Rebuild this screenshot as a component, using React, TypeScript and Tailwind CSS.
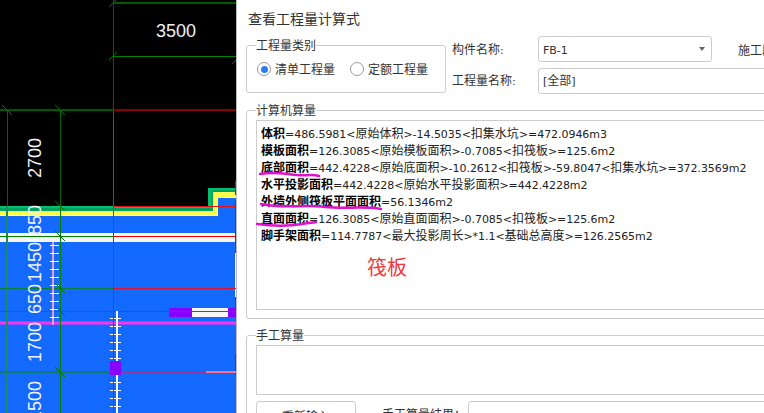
import React from 'react';

const lines: { name: string; rest: string }[] = [
  { name: '体积', rest: '=486.5981<原始体积>-14.5035<扣集水坑>=472.0946m3' },
  { name: '模板面积', rest: '=126.3085<原始模板面积>-0.7085<扣筏板>=125.6m2' },
  { name: '底部面积', rest: '=442.4228<原始底面积>-10.2612<扣筏板>-59.8047<扣集水坑>=372.3569m2' },
  { name: '水平投影面积', rest: '=442.4228<原始水平投影面积>=442.4228m2' },
  { name: '外墙外侧筏板平面面积', rest: '=56.1346m2' },
  { name: '直面面积', rest: '=126.3085<原始直面面积>-0.7085<扣筏板>=125.6m2' },
  { name: '脚手架面积', rest: '=114.7787<最大投影周长>*1.1<基础总高度>=126.2565m2' },
];

const dims = [
  { label: '2700', y: 158 },
  { label: '850', y: 220 },
  { label: '1450', y: 262 },
  { label: '650', y: 299 },
  { label: '1700', y: 342 },
  { label: '1500', y: 401 },
];

const hTicks: [number, number][] = [[113, 3], [113, 56], [236, 60]];
const vTicks: [number, number][] = [[7, 110], [60, 110], [60, 206], [60, 236], [60, 288], [60, 311], [60, 372]];

// latin runs are drawn a size smaller in DejaVu, the way the dialog's font does it
const Mixed = ({ text }: { text: string }) => (
  <>
    {text.split(/([\u4e00-\u9fff：]+)/).map((part, i) =>
      i % 2 === 1 ? (
        <span key={i}>{part}</span>
      ) : (
        <span key={i} className="text-[11px] tracking-[-0.05px] font-['DejaVu_Sans']">{part}</span>
      ),
    )}
  </>
);

const CadCanvas = () => (
  <svg width="236" height="413" className="shrink-0 block bg-black">
    <polygon points="0,206 208,206 208,188 236,188 236,413 0,413" fill="#00c070" />
    <polygon points="0,208 211,208 211,190 236,190 236,413 0,413" fill="#00a060" />
    <polygon points="0,211 213,211 213,192 236,192 236,413 0,413" fill="#ffff4d" />
    <polygon points="0,215 217,215 217,197 236,197 236,413 0,413" fill="#f4f4f4" />
    <polygon points="0,216 218,216 218,198 236,198 236,413 0,413" fill="#1469ff" />

    <rect x="0" y="233" width="235" height="9" fill="#f7f7f7" />
    <rect x="235" y="181" width="1" height="14" fill="#8800ff" />
    <rect x="235" y="200" width="1" height="53" fill="#8800ff" />
    <rect x="235" y="253" width="1" height="44" fill="#ffffff" />
    <rect x="235" y="297" width="1" height="20" fill="#8800ff" />
    <rect x="235" y="354" width="1" height="21" fill="#8800ff" />

    <rect x="169" y="308" width="23" height="9" fill="#8800ff" />
    <rect x="192" y="308" width="36" height="9" fill="#f7f7f7" />
    <rect x="228" y="308" width="8" height="9" fill="#8800ff" />
    <rect x="0" y="321.5" width="236" height="3" fill="#ff33ee" />

    <rect x="113" y="2" width="123" height="2" fill="#005a00" />
    <rect x="113" y="56" width="123" height="1" fill="#008000" />
    <rect x="0" y="109" width="113" height="2" fill="#005a00" />
    <rect x="113" y="109" width="123" height="2" fill="#8b0000" />
    <rect x="113" y="0" width="1" height="110" fill="#006400" />
    <rect x="7" y="110" width="1" height="96" fill="#006400" />
    <rect x="60" y="110" width="1" height="96" fill="#006400" />

    <rect x="0" y="206" width="113" height="1" fill="#00c070" />
    <rect x="113" y="206" width="123" height="1" fill="#e01010" />
    <rect x="6" y="206" width="2" height="207" fill="#1a8a60" />
    <rect x="60" y="206" width="1" height="207" fill="#008000" />
    <rect x="0" y="236" width="113" height="1" fill="#008000" />
    <rect x="113" y="236" width="122" height="1" fill="#f00000" />
    <rect x="0" y="288" width="113" height="1" fill="#0a7f3a" />
    <rect x="113" y="288" width="123" height="1" fill="#e01030" />
    <rect x="0" y="311" width="113" height="1" fill="#0a7f3a" />
    <rect x="113" y="311" width="123" height="1" fill="#e01030" />
    <rect x="0" y="371" width="110" height="2" fill="#0a7f70" />
    <rect x="113" y="371" width="93" height="2" fill="#8a3aa0" />
    <rect x="206" y="371" width="30" height="2" fill="#ff7088" />

    <rect x="52" y="242" width="2" height="83" fill="#e0a0c8" />
    {[245, 253, 261, 269, 277, 285, 293, 301, 309, 317].map(y => (
      <rect key={y} x="50" y={y} width="9" height="1" fill="#ffffff" />
    ))}

    <rect x="116" y="311" width="2" height="102" fill="#ffffff" />
    {[318, 326, 334, 342, 350, 358, 382, 390, 398, 406].map(y => (
      <rect key={y} x="110" y={y} width="11" height="1" fill="#ffffff" />
    ))}
    <rect x="110" y="361" width="11" height="14" fill="#8800ff" />
    <rect x="113" y="111" width="1" height="302" fill="#e01020" />

    {hTicks.map(([x, y]) => (
      <line key={`${x}-${y}`} x1={x - 4} y1={y + 4} x2={x + 4} y2={y - 4} stroke="#007000" />
    ))}
    {vTicks.map(([x, y]) => (
      <line key={`${x}-${y}`} x1={x - 5} y1={y - 5} x2={x + 5} y2={y + 5} stroke="#007000" />
    ))}

    <text x="176" y="37" fill="#f2f2f2" fontSize="18" textAnchor="middle" fontFamily="Liberation Sans, sans-serif">3500</text>
    {dims.map(d => (
      <text
        key={d.label}
        transform={`translate(41 ${d.y}) rotate(-90)`}
        fill="#f2f2f2"
        fontSize="18"
        textAnchor="middle"
        fontFamily="Liberation Sans, sans-serif"
      >
        {d.label}
      </text>
    ))}
  </svg>
);

const Radio = ({ checked, label }: { checked?: boolean; label: string }) => (
  <div className="flex items-center gap-[4px]">
    <span className="w-[14px] h-[14px] rounded-full border border-[#999] flex items-center justify-center bg-white">
      {checked && <span className="w-[7px] h-[7px] rounded-full bg-[#2b7de9]" />}
    </span>
    <span>{label}</span>
  </div>
);

const Scribbles = () => (
  <svg width="764" height="413" className="absolute inset-0 pointer-events-none">
    <g fill="none" stroke="#e010d0" strokeWidth="2.5" strokeLinecap="round">
      <path d="M260 174 C275 171 285 174 297 175 C305 176 312 174 319 176" />
      <path d="M261 204 C285 209 305 204 325 207 C345 209 365 206 381 209" />
      <path d="M257 224 C272 226 290 226 302 224 C308 223 313 223 316 222" />
    </g>
  </svg>
);

export default function App() {
  return (
    <div className="relative w-[764px] h-[413px] overflow-hidden flex bg-white text-xs text-[#333] font-['Noto_Sans_CJK_SC',sans-serif]">
      <CadCanvas />
      <div className="w-px shrink-0 bg-[#bbb]" />
      <div className="shrink-0 w-[560px] pl-[9px] flex flex-col gap-[8px]">
        <div className="flex gap-[6px] shrink-0">
          <div className="w-[200px] shrink-0">
            <div className="h-[37px] pl-[2px] pt-[9px] text-sm leading-[18px]">查看工程量计算式</div>
            <fieldset className="h-[56px] border border-[#ccc] rounded-[3px]">
              <legend className="ml-[9px] leading-[16px]">工程量类别</legend>
              <div className="flex gap-[15px] pl-[10px] pt-[8px] leading-[16px]">
                <Radio checked label="清单工程量" />
                <Radio label="定额工程量" />
              </div>
            </fieldset>
          </div>
          <div className="pt-[36px] flex flex-col gap-[6px]">
            <div className="flex items-center h-[26px]">
              <span className="w-[86px] pt-[2px]"><Mixed text="构件名称:" /></span>
              <div className="w-[174px] h-[26px] border border-[#ccc] rounded-[3px] flex items-center justify-between pl-[4px] pr-[6px]">
                <span className="pt-[2px]"><Mixed text="FB-1" /></span>
                <span className="w-0 h-0 border-x-[3px] border-x-transparent border-t-[4px] border-t-[#666]" />
              </div>
              <span className="ml-[26px] pt-[2px] whitespace-nowrap">施工段</span>
            </div>
            <div className="flex items-center h-[26px]">
              <span className="w-[86px]"><Mixed text="工程量名称:" /></span>
              <div className="w-[300px] h-[26px] border border-[#ccc] rounded-[3px] flex items-center pl-[4px]">
                <span><Mixed text="[全部]" /></span>
              </div>
            </div>
          </div>
        </div>

        <fieldset className="shrink-0 h-[217px] border border-[#ccc] rounded-[3px] pl-[9px] pt-[2px]">
          <legend className="leading-[16px]">计算机算量</legend>
          <div className="h-[190px] border border-[#ccc] pl-[4px] pt-[3px] text-[#222] leading-[17px] whitespace-nowrap">
            {lines.map(l => (
              <div key={l.name} className="h-[17px]">
                <span className="font-bold text-black">{l.name}</span>
                <Mixed text={l.rest} />
              </div>
            ))}
            <div className="mt-[12px] pl-[106px] text-[#f03a3a] text-xl leading-[24px]">筏板</div>
          </div>
        </fieldset>

        <fieldset className="shrink-0 h-[110px] border border-[#ccc] rounded-[3px] pl-[9px] pt-[2px]">
          <legend className="leading-[16px]">手工算量</legend>
          <div className="h-[50px] border border-[#ccc]" />
          <div className="flex mt-[6px]">
            <button className="w-[100px] h-[30px] border border-[#ccc] rounded-[3px] bg-white text-[#333]">重新输入</button>
            <span className="ml-[26px] w-[86px] pt-[5px]">手工算量结果：</span>
            <div className="w-[300px] h-[30px] border border-[#ccc] rounded-[3px]" />
          </div>
        </fieldset>
      </div>
      <Scribbles />
    </div>
  );
}
